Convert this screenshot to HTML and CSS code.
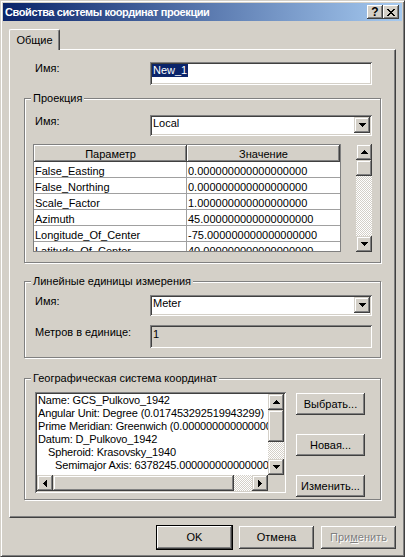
FILE: index.html
```html
<!DOCTYPE html>
<html lang="ru">
<head>
    <meta charset="utf-8">
    <title>Свойства системы координат проекции</title>
    <link rel="stylesheet" href="styles.css">
</head>
<body>
<div class="window">
    <div class="caption">
        <span class="caption-text">Свойства системы координат проекции</span>
        <span class="caption-btns">
            <span class="cbtn help">?</span>
            <span class="cbtn close">
                <svg width="8" height="7" viewBox="0 0 8 7"><path d="M0 0h2v1H0zM6 0h2v1H6zM1 1h2v1H1zM5 1h2v1H5zM2 2h4v1H2zM3 3h2v1H3zM2 4h4v1H2zM1 5h2v1H1zM5 5h2v1H5zM0 6h2v1H0zM6 6h2v1H6z"/></svg>
            </span>
        </span>
    </div>

    <div class="dlg">
        <div class="tabs"><span class="tab">Общие</span></div>

        <div class="panel">
            <div class="row name-row">
                <span class="lbl">Имя:</span>
                <span class="field edit"><span class="sel">New_1</span></span>
            </div>

            <!-- Проекция -->
            <div class="group g-proj">
                <div class="group-title">Проекция</div>
                <div class="row">
                    <span class="lbl">Имя:</span>
                    <span class="field combo">
                        <span class="combo-val">Local</span>
                        <span class="sbtn combo-btn"><svg width="7" height="4" viewBox="0 0 7 4"><path d="M0 0h7v1H6v1H5v1H4v1H3V3H2V2H1V1H0z"/></svg></span>
                    </span>
                </div>
                <div class="params">
                    <div class="grid">
                        <table>
                            <tr><th>Параметр</th><th>Значение</th></tr>
                            <tr><td>False_Easting</td><td>0.000000000000000000</td></tr>
                            <tr><td>False_Northing</td><td>0.000000000000000000</td></tr>
                            <tr><td>Scale_Factor</td><td>1.000000000000000000</td></tr>
                            <tr><td>Azimuth</td><td>45.000000000000000000</td></tr>
                            <tr><td>Longitude_Of_Center</td><td>-75.000000000000000000</td></tr>
                            <tr><td>Latitude_Of_Center</td><td>40.000000000000000000</td></tr>
                        </table>
                    </div>
                    <div class="vscroll tall">
                        <span class="sbtn"><svg width="7" height="4" viewBox="0 0 7 4"><path d="M3 0h1v1h1v1h1v1h1v1H0V3h1V2h1V1h1z"/></svg></span>
                        <span class="sbtn thumb t-params"></span>
                        <span class="track"></span>
                        <span class="sbtn"><svg width="7" height="4" viewBox="0 0 7 4"><path d="M0 0h7v1H6v1H5v1H4v1H3V3H2V2H1V1H0z"/></svg></span>
                    </div>
                </div>
            </div>

            <!-- Линейные единицы -->
            <div class="group g-units">
                <div class="group-title">Линейные единицы измерения</div>
                <div class="row">
                    <span class="lbl">Имя:</span>
                    <span class="field combo">
                        <span class="combo-val">Meter</span>
                        <span class="sbtn combo-btn"><svg width="7" height="4" viewBox="0 0 7 4"><path d="M0 0h7v1H6v1H5v1H4v1H3V3H2V2H1V1H0z"/></svg></span>
                    </span>
                </div>
                <div class="row meters-row">
                    <span class="lbl">Метров в единице:</span>
                    <span class="field edit disabled">1</span>
                </div>
            </div>

            <!-- Географическая система -->
            <div class="group g-geo">
                <div class="group-title">Географическая система координат</div>
                <div class="geo-row">
                    <div class="field memo">
                        <div class="memo-text">
                            <div>Name: GCS_Pulkovo_1942</div>
                            <div>Angular Unit: Degree (0.017453292519943299)</div>
                            <div>Prime Meridian: Greenwich (0.000000000000000000)</div>
                            <div>Datum: D_Pulkovo_1942</div>
                            <div class="ind1">Spheroid: Krasovsky_1940</div>
                            <div class="ind2">Semimajor Axis: 6378245.000000000000000000</div>
                        </div>
                        <div class="vscroll">
                            <span class="sbtn"><svg width="7" height="4" viewBox="0 0 7 4"><path d="M3 0h1v1h1v1h1v1h1v1H0V3h1V2h1V1h1z"/></svg></span>
                            <span class="sbtn thumb t-memo"></span>
                            <span class="track"></span>
                            <span class="sbtn"><svg width="7" height="4" viewBox="0 0 7 4"><path d="M0 0h7v1H6v1H5v1H4v1H3V3H2V2H1V1H0z"/></svg></span>
                        </div>
                        <div class="hscroll">
                            <span class="sbtn"><svg width="4" height="7" viewBox="0 0 4 7"><path d="M4 0v7H3V6H2V5H1V4H0V3h1V2h1V1h1V0z"/></svg></span>
                            <span class="sbtn thumb t-h"></span>
                            <span class="track"></span>
                            <span class="sbtn"><svg width="4" height="7" viewBox="0 0 4 7"><path d="M0 0h1v1h1v1h1v1h1v1H3v1H2v1H1v1H0z"/></svg></span>
                        </div>
                        <div class="corner"></div>
                    </div>
                    <div class="geo-btns">
                        <span class="btn small">Выбрать...</span>
                        <span class="btn small">Новая...</span>
                        <span class="btn small">Изменить...</span>
                    </div>
                </div>
            </div>
        </div>

        <div class="footer">
            <span class="btn default">OK</span>
            <span class="btn">Отмена</span>
            <span class="btn disabled">При<u>м</u>енить</span>
        </div>
    </div>
</div>
</body>
</html>
```

FILE: styles.css
```css
* {
    box-sizing: border-box;
}

html, body {
    margin: 0;
    padding: 0;
    background: #d4d0c8;
}

body {
    font: 11px/13px "Liberation Sans", Arial, sans-serif;
    color: #000;
}

/* window frame */
.window {
    width: 405px;
    height: 557px;
    display: flex;
    flex-direction: column;
    padding: 2px;
    border: 1px solid;
    border-color: #d4d0c8 #404040 #404040 #d4d0c8;
    box-shadow: inset 1px 1px #fff, inset -1px -1px #808080;
    background: #d4d0c8;
}

.caption {
    height: 18px;
    display: flex;
    align-items: center;
    padding: 0 3px 0 2px;
    background: linear-gradient(to right, #0a246a, #a6caf0);
    color: #fff;
    font-weight: bold;
    white-space: nowrap;
}

.caption-text {
    letter-spacing: -0.4px;
}

.caption-btns {
    margin-left: auto;
    display: flex;
}

.cbtn {
    width: 16px;
    height: 14px;
    display: flex;
    align-items: center;
    justify-content: center;
    background: #d4d0c8;
    color: #000;
    box-shadow: inset -1px -1px #404040, inset 1px 1px #fff, inset -2px -2px #808080;
}

.cbtn.help {
    font-size: 12px;
    padding-top: 1px;
}

/* dialog body */
.dlg {
    flex: 1;
    padding: 8px 6px 0;
    display: flex;
    flex-direction: column;
}

.tabs {
    display: flex;
    height: 20px;
}

.tab {
    position: relative;
    z-index: 1;
    width: 51px;
    height: 21px;
    display: flex;
    align-items: center;
    justify-content: center;
    background: #d4d0c8;
    border-left: 1px solid #fff;
    border-top: 1px solid #fff;
    border-right: 1px solid #404040;
    border-radius: 2px 2px 0 0;
    box-shadow: inset -1px 0 #808080;
}

.panel {
    border-top: 1px solid #fff;
    border-left: 1px solid #fff;
    border-right: 1px solid #404040;
    border-bottom: 1px solid #404040;
    box-shadow: inset -1px -1px #808080;
    padding: 12px 0 17px 14px;
}

.row {
    display: flex;
    align-items: flex-start;
}

.lbl {
    width: 115px;
    flex: none;
}

.name-row {
    padding-left: 11px;
}

/* sunken fields */
.field {
    display: block;
    background: #fff;
    box-shadow: inset 1px 1px #808080, inset -1px -1px #fff, inset 2px 2px #404040, inset -2px -2px #d4d0c8;
}

.edit {
    width: 222px;
    height: 23px;
    padding: 2px;
    white-space: nowrap;
}

.sel {
    display: inline-block;
    padding: 0 1px;
    background: #0a246a;
    color: #fff;
}

.edit.disabled {
    background: #d4d0c8;
    padding: 3px 2px 0 3px;
}

.combo {
    width: 222px;
    height: 21px;
    display: flex;
    align-items: flex-start;
    padding: 2px;
}

.combo-val {
    flex: 1;
    padding-left: 1px;
}

.combo-btn {
    width: 16px;
    height: 17px;
}

/* raised scroll / combo buttons */
.sbtn {
    display: flex;
    align-items: center;
    justify-content: center;
    width: 16px;
    height: 16px;
    flex: none;
    background: #d4d0c8;
    box-shadow: inset -1px -1px #404040, inset 1px 1px #d4d0c8, inset -2px -2px #808080, inset 2px 2px #fff;
}

.sbtn svg {
    display: block;
}

.track {
    flex: 1;
    background: repeating-conic-gradient(#fff 0 25%, #d4d0c8 0 50%) 0 0 / 2px 2px;
}

.vscroll {
    width: 16px;
    display: flex;
    flex-direction: column;
}

.hscroll {
    height: 16px;
    display: flex;
}

/* group boxes */
.group {
    width: 357px;
    border: 1px solid #808080;
    box-shadow: inset 1px 1px #fff, 1px 1px #fff;
    padding: 0 8px;
}

.group-title {
    display: table;
    margin: -7px 0 0 -2px;
    padding: 0 2px;
    background: #d4d0c8;
}

.group .row {
    padding-left: 2px;
}

.g-proj {
    margin-top: 13px;
    padding-bottom: 10px;
}

.g-proj .row {
    margin-top: 10px;
}

.params {
    margin-top: 8px;
    display: flex;
    justify-content: space-between;
}

.grid {
    width: 308px;
    height: 108px;
    overflow: hidden;
    background: #fff;
    border: 1px solid #808080;
}

.grid table {
    width: 306px;
    border-spacing: 0;
    table-layout: fixed;
}

.grid th {
    height: 17px;
    padding: 1px 0 0;
    font-weight: normal;
    text-align: center;
    background: #d4d0c8;
    box-shadow: inset -1px -1px #404040, inset 1px 1px #fff, inset -2px -2px #808080;
}

.grid th:first-child {
    width: 153px;
}

.grid td {
    height: 16px;
    padding: 3px 1px 0;
    line-height: 12px;
    white-space: nowrap;
    overflow: hidden;
    border-bottom: 1px solid #a0a0a0;
}

.grid td:first-child {
    border-right: 1px solid #a0a0a0;
}

.vscroll.tall {
    height: 108px;
}

.t-params {
    height: 16px;
}

.g-units {
    margin-top: 18px;
    padding-bottom: 9px;
}

.g-units .row {
    margin-top: 7px;
}

.g-units .meters-row {
    margin-top: 9px;
}

.meters-row .lbl {
    padding-top: 1px;
}

.g-geo {
    margin-top: 20px;
    padding-bottom: 2px;
}

.geo-row {
    display: flex;
    align-items: flex-start;
    margin-top: 7px;
    margin-left: 2px;
}

.memo {
    width: 251px;
    height: 101px;
    padding: 2px;
    display: grid;
    grid-template-columns: 231px 16px;
    grid-template-rows: 81px 16px;
}

.memo-text {
    overflow: hidden;
    white-space: nowrap;
    padding-left: 1px;
    letter-spacing: -0.15px;
}

.ind1 {
    padding-left: 10px;
}

.ind2 {
    padding-left: 17px;
}

.t-memo {
    height: 32px;
}

.t-h {
    width: 181px;
}

.corner {
    background: #d4d0c8;
}

.geo-btns {
    margin-left: 10px;
    padding-top: 1px;
    display: flex;
    flex-direction: column;
    gap: 19px;
}

/* push buttons */
.btn {
    display: flex;
    align-items: center;
    justify-content: center;
    width: 75px;
    height: 23px;
    background: #d4d0c8;
    box-shadow: inset -1px -1px #404040, inset 1px 1px #fff, inset -2px -2px #808080;
}

.btn.small {
    width: 69px;
    height: 22px;
}

.btn.default {
    outline: 1px solid #000;
}

.btn.disabled {
    color: #808080;
    text-shadow: 1px 1px #fff;
}

.footer {
    display: flex;
    justify-content: flex-end;
    gap: 7px;
    padding-top: 8px;
}
```
